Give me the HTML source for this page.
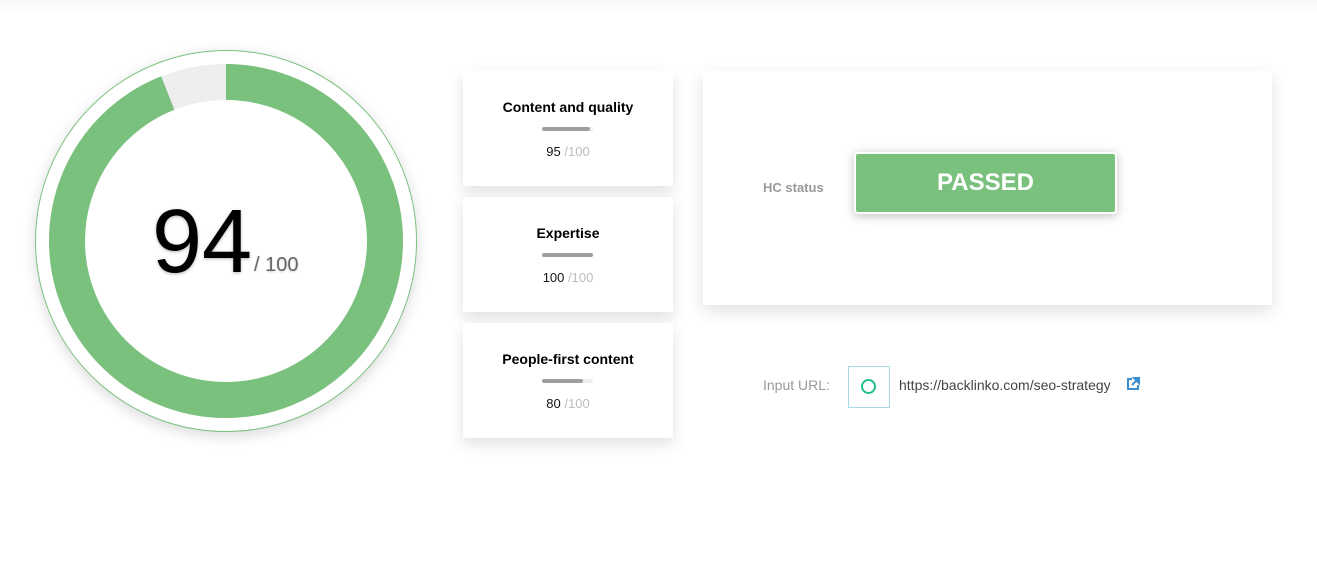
<!DOCTYPE html>
<html><head><style>
body{margin:0;width:1317px;height:561px;background:#fff;font-family:"Liberation Sans",Arial,sans-serif;position:relative;overflow:hidden}
.top{position:absolute;left:0;top:0;width:1317px;height:12px;background:linear-gradient(#f6f6f6,#fff)}
.card{position:absolute;left:463px;width:210px;height:115px;background:#fff;box-shadow:0 6px 14px rgba(0,0,0,.12);text-align:center}
.card h3{margin:0;position:absolute;top:28px;width:100%;font-size:14px;font-weight:bold;color:#000}
.bar{position:absolute;left:79px;top:56px;width:51px;height:4px;border-radius:2px;background:#eee}
.bar i{display:block;height:4px;border-radius:2px;background:#9e9e9e}
.sc{position:absolute;top:73px;width:100%;font-size:13px;color:#111}
.sc span{color:#bbb}
.panel{position:absolute;left:703px;top:71px;width:569px;height:234px;background:#fff;box-shadow:0 6px 16px rgba(0,0,0,.12)}
</style></head><body>
<div class="top"></div>
<div style="position:absolute;left:35px;top:50px;width:380px;height:380px;border-radius:50%;border:1px solid #7bc17e;box-shadow:0 4px 14px rgba(0,0,0,.15);background:#fff"></div>
<svg style="position:absolute;left:0;top:0" width="460" height="460">
<circle cx="226" cy="241" r="159" fill="none" stroke="#eeeeee" stroke-width="36"/>
<circle cx="226" cy="241" r="159" fill="none" stroke="#7bc17e" stroke-width="36" stroke-dasharray="939 100" transform="rotate(-90 226 241)"/>
</svg>
<div style="position:absolute;left:152px;top:192px;font-size:90px;color:#000;line-height:100px;text-shadow:0 1px 3px rgba(0,0,0,.3)">94</div>
<div style="position:absolute;left:254px;top:254px;font-size:20px;color:#666;text-shadow:0 1px 2px rgba(0,0,0,.2)">/ 100</div>

<div class="card" style="top:71px"><h3>Content and quality</h3><div class="bar"><i style="width:48px"></i></div><div class="sc">95 <span>/100</span></div></div>
<div class="card" style="top:197px"><h3>Expertise</h3><div class="bar"><i style="width:51px"></i></div><div class="sc">100 <span>/100</span></div></div>
<div class="card" style="top:323px"><h3>People-first content</h3><div class="bar"><i style="width:41px"></i></div><div class="sc">80 <span>/100</span></div></div>

<div class="panel"></div>
<div style="position:absolute;left:763px;top:180px;font-size:13px;font-weight:bold;color:#999">HC status</div>
<div style="position:absolute;left:854px;top:152px;width:259px;height:58px;background:#7bc17e;border:2px solid #fff;border-radius:4px;box-shadow:0 2px 10px rgba(0,0,0,.25);color:#fff;font-weight:bold;font-size:24px;text-align:center;line-height:58px">PASSED</div>

<div style="position:absolute;left:763px;top:377px;font-size:14px;color:#999">Input URL:</div>
<div style="position:absolute;left:848px;top:366px;width:40px;height:40px;border:1px solid #a8d8ea"></div>
<div style="position:absolute;left:861px;top:379px;width:11px;height:11px;border:2.5px solid #1fbf8f;border-radius:50%"></div>
<div style="position:absolute;left:899px;top:377px;font-size:14px;color:#444">https://backlinko.com/seo-strategy</div>
<svg style="position:absolute;left:1126px;top:377px" width="14" height="14" viewBox="0 0 14 14"><path d="M6 2H2v10h10V8" fill="none" stroke="#3a8fd0" stroke-width="2"/><path d="M8 1h5v5z M12 2L6 8" fill="#3a8fd0" stroke="#3a8fd0" stroke-width="2"/></svg>
</body></html>
